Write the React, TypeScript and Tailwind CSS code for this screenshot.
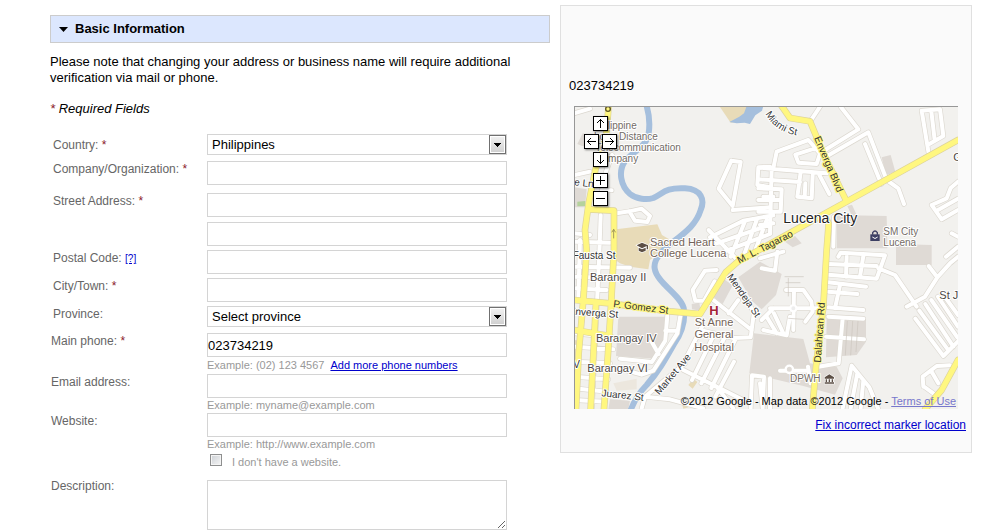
import type { ReactNode } from "react";

const fieldClass =
  "block h-6 w-full border border-[#d4d4d4] bg-white text-[13px] leading-4 text-black outline-none";

// casing + fill are drawn from the same list, so junctions stay open
const streets = [
  "M12 40 60 26 M14 225 60 215 M12 400 60 405 M12 425 120 428 M12 500 180 503 M12 530 60 532 M12 565 110 570 M12 700 130 712 M12 740 130 748",
  "M12 785 120 790 M12 830 115 838 M12 865 110 875 M12 900 105 905 M92 345 88 460 66 925 M30 420 25 600",
  "M126 165 108 215 M95 270 125 271 M140 340 178 334 215 326 240 348 232 366 195 362 178 334",
  "M484 182 512 186 488 318 446 266 484 182 M488 330 600 322 M565 202 600 200 M565 202 562 255 600 262 M580 290 610 290",
  "M416 390 500 478 M420 412 520 362 610 346 M440 430 600 374 M462 455 600 402 M524 366 482 470 M560 360 520 470 M590 360 556 450",
  "M440 510 405 512 368 570 376 602 402 602 434 544 M430 600 545 690 M482 528 552 636 542 712 490 714 390 690 M505 600 476 640",
  "M398 676 335 800 M434 700 366 840 M466 708 394 850 M498 714 424 864 M492 785 436 890 M340 810 530 905 M345 790 225 890 300 898 400 925",
  "M440 860 490 925 M292 645 286 722 246 786 150 776 M286 692 322 692 M332 642 322 700 250 812 215 824 150 806 M244 724 266 762 M225 890 215 925",
  "M546 826 542 925 M546 826 582 830 578 925 M600 835 600 925 M575 505 615 512 622 455 M575 660 610 625",
  "M720 65 750 20 M812 20 865 88 765 150 M765 172 895 97 950 240 M885 132 934 252 M950 240 985 265 1002 312",
  "M1055 32 1076 160 M1055 32 1110 28 1120 108 1078 132 M1084 34 1094 120",
  "M565 203 770 220 M610 205 620 155 715 120 750 160 740 192 685 188 676 164 735 145 M565 238 690 246 M692 216 682 290 725 295 728 225 M706 250 704 290",
  "M748 225 778 282 M605 205 600 400 M565 265 635 268 632 335 565 335 M565 300 630 300 M792 350 790 440 M570 375 610 370 M570 475 640 455",
  "M805 470 812 458 945 466 920 536 775 524 M775 492 920 498 M830 470 828 530 M880 468 870 530",
  "M775 547 888 560 M775 575 862 582 M775 622 880 630 M775 650 880 656 M768 710 882 718 M818 655 806 790 745 800 M810 555 795 625",
  "M925 505 975 525 1040 620 M1010 620 1065 590 1102 532 1076 498 M1102 532 1140 490 1164 470 M1128 470 1164 440 M1145 400 1164 410",
  "M1036 656 1120 768 1164 724 M1048 632 1136 752 M1066 612 1150 740 M1084 600 1162 712 M1104 590 1164 680 M1124 590 1164 645",
  "M1085 315 1115 358 1164 330 M1085 315 1130 295 1142 264 1164 245 M1104 330 1164 296",
  "M1060 860 1058 830 1100 798 1140 796 M1085 815 1105 850 M1062 860 1090 880",
  "M845 797 818 925 M845 797 898 862 924 925 M862 820 842 925 M880 842 872 925 M570 850 578 925",
  "M648 570 700 570 724 604 728 635 706 665 M672 570 670 690 M600 625 745 625 M580 690 650 706 660 650 M590 650 620 700 M612 640 640 700",
  "M630 812 712 812 M714 800 722 850",
].join(" ");

const highways = [
  "M116 18 108 110 76 210 56 310 45 390 50 450 40 600 26 760 18 927",
  "M56 328 132 332 132 450 124 600 114 760 102 927",
  "M78 606 62 927",
  "M12 600 120 610 300 634 390 642 468 516 505 484 600 432 830 305 1164 120",
  "M12 690 120 708",
  "M635 18 660 54 720 64 760 160 830 305",
  "M762 342 776 372 770 450 760 620 738 800 727 927",
  "M1164 780 1115 870 1066 927",
].join(" ");

function CityMap() {
  return (
    <svg
      viewBox="12 18 1152 909"
      className="block w-full font-['Liberation_Sans',Arial,sans-serif]"
      role="img"
      aria-label="Map of Lucena City"
    >
      <rect x="12" y="18" width="1152" height="909" fill="#f2f1ee" />
      <g fill="#dfdad5">
        <path d="M22 132 38 100 78 112 66 142 36 138Z" />
        <path d="M12 262 50 268 45 322 12 322Z" />
        <path d="M800 345 950 348 952 445 800 445ZM978 432 1085 435 1085 495 978 495Z" />
        <path d="M935 172 962 165 976 215 948 226ZM832 318 846 314 860 345 846 348Z" />
        <path d="M645 425 675 408 695 430 668 442Z" />
        <path d="M145 650 285 650 280 740 258 776 138 768Z" />
        <path d="M505 532 570 485 635 522 618 585 575 628 545 602ZM430 590 458 535 488 556 458 612ZM365 612 388 608 392 632 366 628Z" />
        <path d="M552 700 700 717 720 790 800 800 818 835 795 884 700 858 538 820Z" />
        <path d="M770 655 888 655 888 725 860 765 768 772Z" />
        <path d="M120 898 180 902 175 927 115 927Z" />
      </g>
      <path d="M130 850 200 836 200 868 140 872Z" fill="#ece7de" />
      <g fill="#e8dbb8">
        <path d="M138 388 262 373 276 405 310 425 240 480 235 508 180 500 150 490 136 480Z" />
        <path d="M448 18 560 18 540 60 482 68Z" />
        <path d="M355 855 370 836 382 846 368 866ZM336 912 350 904 356 922 340 926ZM12 720 30 722 26 785 12 785Z" />
      </g>
      <path d="M22 305 46 303 46 318 22 319Z" fill="#b5d29c" />
      <path d="M478 66 508 50 522 40 530 18 580 18 576 32 556 46 540 72 524 68 500 70Z" fill="#a5bfdd" />
      <path
        d="M230 18Q242 60 236 100C232 140 180 160 164 185C144 215 152 258 180 282C200 298 230 300 250 294C280 280 285 262 345 265C395 268 405 300 392 330C380 370 350 395 310 425C270 455 250 480 254 505C260 550 340 590 342 630C346 670 335 700 312 732C285 780 265 815 230 855Q200 885 182 930"
        fill="none"
        stroke="#a5bfdd"
        strokeWidth="18"
      />
      <g fill="none" strokeLinecap="round" strokeLinejoin="round">
        <path d={streets} stroke="#dcd8d0" strokeWidth="16" />
        <path d={streets} stroke="#fff" strokeWidth="12" />
        <path d={highways} stroke="#ddd39a" strokeWidth="20" />
        <path d={highways} stroke="#fff780" strokeWidth="16" />
        <path d="M645 530 700 530M655 535 655 588M648 548 690 548M656 655 700 658M832 664 826 765M848 664 842 765M864 664 858 755" stroke="#cbc5be" strokeWidth="2" />
        <circle cx="658" cy="808" r="11" fill="#dfdad5" stroke="#fff" strokeWidth="7" />
        <circle cx="670" cy="625" r="9" fill="#eee" stroke="#fff" strokeWidth="6" />
        <path d="M131 414V388M126 396 131 388 136 396" stroke="#a49a5c" strokeWidth="3" />
        <circle cx="114" cy="27" r="7" stroke="#5d5522" strokeWidth="4" />
      </g>

      <g fontSize="30" fill="#736c66" stroke="#fff" strokeWidth="6" strokeLinejoin="round" paintOrder="stroke">
        <text x="70" y="88">Philippine</text>
        <text x="72" y="121">Long Distance</text>
        <text x="76" y="154">Telecommunication</text>
        <text x="76" y="187">Company</text>
        <text x="940" y="404">SM City</text>
        <text x="940" y="437">Lucena</text>
        <text x="660" y="847">DPWH</text>
      </g>
      <g fontSize="33" fill="#736357" stroke="#fff" strokeWidth="6" strokeLinejoin="round" paintOrder="stroke">
        <text x="240" y="437">Sacred Heart</text>
        <text x="240" y="472">College Lucena</text>
        <text x="432" y="677" textAnchor="middle">St Anne</text>
        <text x="432" y="715" textAnchor="middle">General</text>
        <text x="432" y="752" textAnchor="middle">Hospital</text>
      </g>
      <g fontSize="33" fill="#4d4744" stroke="#fff" strokeWidth="6" strokeLinejoin="round" paintOrder="stroke">
        <text x="60" y="542">Barangay II</text>
        <text x="78" y="725">Barangay IV</text>
        <text x="52" y="817">Barangay VI</text>
        <text x="1108" y="596">St J</text>
        <text x="1150" y="182">G</text>
      </g>
      <text x="640" y="370" fontSize="42" fill="#222" stroke="#fff" strokeWidth="6" strokeLinejoin="round" paintOrder="stroke">
        Lucena City
      </text>
      <g fontSize="30" fill="#333" stroke="#fff" strokeWidth="6" strokeLinejoin="round" paintOrder="stroke">
        <path id="miami" d="M586 42Q618 98 690 108" fill="none" stroke="none" />
        <text>
          <textPath href="#miami">Miami St</textPath>
        </text>
        <text transform="translate(12 256) rotate(6)">e Ln</text>
        <text transform="translate(8 477)">Fausta St</text>
        <text transform="translate(-4 643) rotate(4)">Enverga St</text>
        <text transform="translate(94 889) rotate(6)">Juarez St</text>
        <text transform="translate(10 805)">V</text>
        <text transform="translate(268 886) rotate(-50)">Market Ave</text>
        <text transform="translate(470 530) rotate(55)">Mendeja St</text>
      </g>
      <g fontSize="30" fill="#333" stroke="#fff780" strokeWidth="6" strokeLinejoin="round" paintOrder="stroke">
        <text transform="translate(129 621) rotate(7)">P. Gomez St</text>
        <text transform="translate(508 491) rotate(-27)">M. L. Tagarao</text>
        <text transform="translate(732 114) rotate(67)">Enverga Blvd</text>
        <text transform="translate(752 788) rotate(-86)">Dalahican Rd</text>
      </g>

      <text x="432" y="644" textAnchor="middle" fontSize="39" fontWeight="bold" fill="#a32638" stroke="#fff" strokeWidth="5" paintOrder="stroke">
        H
      </text>
      {/* college, shop and civic building markers */}
      <path d="M216 428 234 436V448H230V438L216 445 200 436ZM206 443 216 448 227 443V452L216 457 206 452Z" fill="#5c4f45" stroke="#fff" strokeWidth="4" paintOrder="stroke" />
      <rect x="901" y="403" width="28" height="20" fill="#3d3f63" />
      <path d="M908 404V398Q915 388 922 398V404" fill="none" stroke="#3d3f63" strokeWidth="4" />
      <path d="M907 411Q915 420 923 411" fill="none" stroke="#fff" strokeWidth="3" />
      <path d="M764 832 778 823 792 832V836H764ZM767 838H771V846H767ZM776 838H780V846H776ZM785 838H789V846H785ZM764 847H792V851H764Z" fill="#5c4f45" stroke="#fff" strokeWidth="4" paintOrder="stroke" />
    </svg>
  );
}

function MapButton({ label, d }: { label: string; d: string }) {
  return (
    <button
      type="button"
      aria-label={label}
      className="block size-[15px] border border-black bg-white shadow-[1px_1px_2px_rgba(0,0,0,0.5)]"
    >
      <svg viewBox="0 0 13 13" className="block size-[13px]" fill="none" stroke="#000" shapeRendering="crispEdges">
        <path d={d} />
      </svg>
    </button>
  );
}

function Star() {
  return <span className="text-[#8b1a2b]">*</span>;
}

type RowProps = {
  id: string;
  label: string;
  required?: boolean;
  extra?: ReactNode;
  className?: string;
  labelClass?: string;
  children: ReactNode;
};

function Row({ id, label, required, extra, className = "", labelClass = "pl-[3px]", children }: RowProps) {
  return (
    <div className={`flex items-start ${className}`}>
      <div className={`w-[157px] shrink-0 text-xs leading-4 text-[#666] ${labelClass}`}>
        <label htmlFor={id}>
          {label} {required && <Star />}
        </label>
        {extra}
      </div>
      <div className="min-w-0 flex-1">{children}</div>
    </div>
  );
}

function Select({ id, value }: { id: string; value: string }) {
  return (
    <div className="relative">
      <select
        id={id}
        defaultValue={value}
        className="block h-[21px] w-full appearance-none border border-[#d4d4d4] bg-white pl-1 text-[13px] leading-4 text-black outline-none"
      >
        <option>{value}</option>
      </select>
      <span className="pointer-events-none absolute top-px right-px flex h-[19px] w-[17px] items-center justify-center border border-[#707070] bg-linear-to-b from-[#f2f2f2] to-[#cfcfcf] shadow-[inset_0_0_0_1px_#fff]">
        <svg viewBox="0 0 7 4" className="h-1 w-[7px]" shapeRendering="crispEdges">
          <path d="M0 0H7V1H6V2H5V3H4V4H3V3H2V2H1V1H0Z" />
        </svg>
      </span>
    </div>
  );
}

export default function App() {
  return (
    <main className="grid grid-cols-[125fr_103fr] items-start gap-2.5 bg-white pr-[9px] pl-[50px] font-['Liberation_Sans',Arial,sans-serif] text-[13px] leading-4 text-black">
      <form className="min-w-0 pt-[15px]">
        <h2>
          <button
            type="button"
            aria-expanded="true"
            className="flex h-7 w-full items-center gap-[7px] border border-[#ccc] bg-[#dce7fe] pl-2 text-[13px] font-bold"
          >
            <svg viewBox="0 0 9 5" className="h-[5px] w-[9px]">
              <path d="M0 0H9L4.500 5Z" />
            </svg>
            Basic Information
          </button>
        </h2>
        <p className="mt-[11px]">
          Please note that changing your address or business name will require additional verification via mail or
          phone.
        </p>
        <p className="mt-[15px] italic">
          <Star /> Required Fields
        </p>

        <div className="mt-[17px] pr-[43px]">
          <Row id="country" label="Country:" required className="mb-1.5" labelClass="pt-[3px] pl-[3px]">
            <Select id="country" value="Philippines" />
          </Row>
          <Row id="company" label="Company/Organization:" required className="mb-2">
            <input id="company" type="text" className={fieldClass} />
          </Row>
          <Row id="street" label="Street Address:" required className="mb-1">
            <input id="street" type="text" className={`mb-[5px] ${fieldClass}`} />
            <input type="text" aria-label="Street Address line 2" className={fieldClass} />
          </Row>
          <Row
            id="postal"
            label="Postal Code:"
            className="mb-1"
            extra={
              <a href="#postal" className="text-[10px] text-[#0000cc] underline">
                [?]
              </a>
            }
          >
            <input id="postal" type="text" className={fieldClass} />
          </Row>
          <Row id="city" label="City/Town:" required className="mb-1">
            <input id="city" type="text" className={fieldClass} />
          </Row>
          <Row id="province" label="Province:" className="mb-1.5">
            <Select id="province" value="Select province" />
          </Row>
          <Row id="phone" label="Main phone:" required labelClass="pl-px">
            <input id="phone" type="text" defaultValue="023734219" className={fieldClass} />
            <p className="h-[17px] text-[11px] text-[#999]">
              Example: (02) 123 4567
              <a href="#phone" className="ml-1.5 text-[#0000cc] underline">
                Add more phone numbers
              </a>
            </p>
          </Row>
          <Row id="email" label="Email address:" labelClass="pl-px">
            <input id="email" type="text" className={fieldClass} />
            <p className="h-[15px] text-[11px] leading-[14px] text-[#999]">Example: myname@example.com</p>
          </Row>
          <Row id="website" label="Website:" className="mb-2" labelClass="pl-px">
            <input id="website" type="text" className={fieldClass} />
            <p className="h-[15px] text-[11px] leading-[14px] text-[#999]">Example: http://www.example.com</p>
            <label className="flex h-5 items-center gap-2.5 pl-[3px] text-[11px] text-[#999]">
              <input
                type="checkbox"
                className="mb-1 size-3 appearance-none border border-[#8e8f8f] bg-linear-to-br from-[#ccd0d5] to-[#f6f6f6] shadow-[inset_0_0_0_1px_#f4f4f4]"
              />
              I don't have a website.
            </label>
          </Row>
          <Row id="description" label="Description:" labelClass="pl-px -mt-0.5">
            <textarea
              id="description"
              className="block h-[50px] w-full resize border border-[#d4d4d4] bg-white p-1 text-[13px] outline-none"
            />
          </Row>
        </div>
      </form>

      <aside className="mt-[5px] min-w-0 border border-[#e0e0e0] bg-[#fafafa] pt-[72px] pb-[19px]">
        <p className="pl-2">023734219</p>
        <div className="relative mx-[13px] mt-3 overflow-hidden">
          <CityMap />
          <div className="pointer-events-none absolute inset-0 border-t border-l border-[#979797]" />
          <div className="absolute top-2.5 left-2.5 flex flex-col items-center gap-[3px]">
            <MapButton label="Pan up" d="M6.500 2V11M5 3.500H8M4 4.500H5M8 4.500H9M3 5.500H4M9 5.500H10" />
            <div className="flex gap-[3px]">
              <MapButton label="Pan left" d="M2 6.500H11M3.500 5V8M4.500 4V5M4.500 8V9M5.500 3V4M5.500 9V10" />
              <MapButton label="Pan right" d="M2 6.500H11M9.500 5V8M8.500 4V5M8.500 8V9M7.500 3V4M7.500 9V10" />
            </div>
            <MapButton label="Pan down" d="M6.500 2V11M5 9.500H8M4 8.500H5M8 8.500H9M3 7.500H4M9 7.500H10" />
            <div className="mt-[3px] flex flex-col gap-[3px]">
              <MapButton label="Zoom in" d="M2 6.500H11M6.500 2V11" />
              <MapButton label="Zoom out" d="M2 6.500H11" />
            </div>
          </div>
          <p className="absolute right-0.5 bottom-0 text-[11px] whitespace-nowrap">
            ©2012 Google - Map data ©2012 Google -{" "}
            <a href="#terms" className="text-[#7777cc] underline">
              Terms of Use
            </a>
          </p>
        </div>
        <p className="mt-2 pr-[5px] text-right text-xs leading-4">
          <a href="#marker" className="text-[#0000cc] underline">
            Fix incorrect marker location
          </a>
        </p>
      </aside>
    </main>
  );
}
